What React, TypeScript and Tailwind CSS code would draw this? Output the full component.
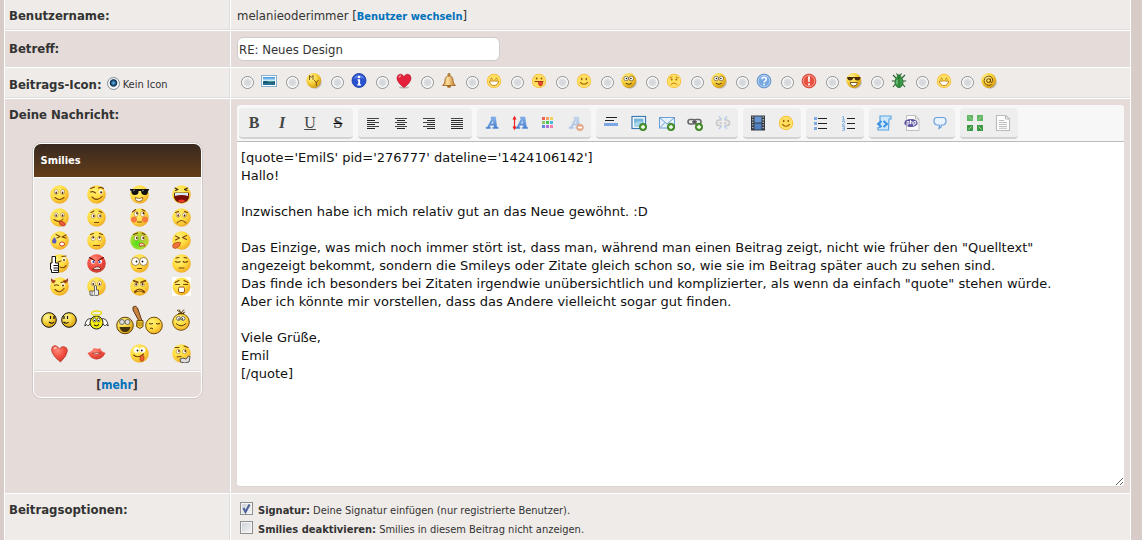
import type { ReactNode } from 'react';

/* ---------- shared drawing helpers ---------- */

function Defs() {
  return (
    <svg width="0" height="0" className="absolute" aria-hidden="true">
      <defs>
        <radialGradient id="yellow" cx="0.38" cy="0.32" r="0.78">
          <stop offset="0" stopColor="#fff27a" />
          <stop offset="0.5" stopColor="#ffdc40" />
          <stop offset="0.85" stopColor="#f2b22a" />
          <stop offset="1" stopColor="#d8951c" />
        </radialGradient>
        <radialGradient id="red" cx="0.38" cy="0.3" r="0.75">
          <stop offset="0" stopColor="#ff8a78" />
          <stop offset="0.6" stopColor="#ee4a3c" />
          <stop offset="1" stopColor="#c43a30" />
        </radialGradient>
        <radialGradient id="green" cx="0.35" cy="0.65" r="0.75">
          <stop offset="0" stopColor="#4fe01c" />
          <stop offset="0.5" stopColor="#a5dd30" />
          <stop offset="1" stopColor="#e0c03a" />
        </radialGradient>
        <radialGradient id="gold" cx="0.35" cy="0.3" r="0.8">
          <stop offset="0" stopColor="#fff6a0" />
          <stop offset="0.45" stopColor="#f8d440" />
          <stop offset="0.85" stopColor="#dba518" />
          <stop offset="1" stopColor="#a87608" />
        </radialGradient>
        <linearGradient id="blueA" x1="0" y1="0" x2="0" y2="1">
          <stop offset="0" stopColor="#8db8ee" />
          <stop offset="1" stopColor="#3f78cc" />
        </linearGradient>
        <linearGradient id="sky" x1="0" y1="0" x2="0" y2="1">
          <stop offset="0" stopColor="#3c8ed8" />
          <stop offset="0.45" stopColor="#c8ecff" />
          <stop offset="0.6" stopColor="#2f7a70" />
          <stop offset="1" stopColor="#1e6aa8" />
        </linearGradient>
        <linearGradient id="bell" x1="0" y1="0" x2="1" y2="0">
          <stop offset="0" stopColor="#c98a3a" />
          <stop offset="0.4" stopColor="#ffe0a0" />
          <stop offset="1" stopColor="#b8741f" />
        </linearGradient>
      </defs>
    </svg>
  );
}

function Svg({ w = 16, h = 16, children }: { w?: number; h?: number; children: ReactNode }) {
  return (
    <svg width={w} height={h} viewBox={`0 0 ${w} ${h}`} fill="none" className="block shrink-0" aria-hidden="true">
      {children}
    </svg>
  );
}

function Face({ fill = 'url(#yellow)', children }: { fill?: string; children: ReactNode }) {
  return (
    <Svg w={19} h={19}>
      <circle cx="9.5" cy="9.500" r="9.300" fill={fill} />
      {children}
    </Svg>
  );
}

const brown = '#7a4108';

function Eyes({ y = 7, dx = 0, dy = 0, r = 2.6 }: { y?: number; dx?: number; dy?: number; r?: number }) {
  return (
    <>
      <ellipse cx="6.2" cy={y} rx="2" ry={r} fill="#fff" stroke="#a0640f" strokeWidth="0.5" />
      <ellipse cx="12.6" cy={y} rx="2" ry={r} fill="#fff" stroke="#a0640f" strokeWidth="0.5" />
      <ellipse cx={6.2 + dx} cy={y + dy} rx="0.8" ry="1.3" fill="#5a2c05" />
      <ellipse cx={12.6 + dx} cy={y + dy} rx="0.8" ry="1.3" fill="#5a2c05" />
    </>
  );
}

function Line({ d, c = brown, w = 1.1 }: { d: string; c?: string; w?: number }) {
  return <path d={d} stroke={c} strokeWidth={w} strokeLinecap="round" strokeLinejoin="round" />;
}

/* ---------- smilies box ---------- */

const smilies: { name: string; art: ReactNode }[] = [
  { name: 'Lächeln', art: <Face><Eyes dy={0.8} /><Line d="M5 12.500q4.500 4 9 0" /></Face> },
  {
    name: 'Zwinkern',
    art: <Face><ellipse cx="14" cy="7" rx="1.900" ry="2.400" fill="#fff" /><circle cx="14.200" cy="7.400" r="1.100" fill="#5a2c05" /><Line d="M3.500 7q2.500-1 5 1M11.500 3q2.500-1.500 5 .500M3.500 3.500l4-1.500M5 12q5 5 10-.500" /></Face>,
  },
  {
    name: 'Cool',
    art: <Face><path d="M0 4h19v1.500h-1c0 3.500-1 4.500-3.300 4.500-2.700 0-3.400-1.600-3.700-4h-2.400c0 2.500-.900 4-3.600 4C2.500 10 1.500 9 1.300 5.500H0z" fill="#111" /><path d="M3 6l2-1M12 6l2-1" stroke="#8a8a8a" /><path d="M5 12.500q4 2 8 0 0 4-4 4t-4-4z" fill="#fff" stroke={brown} strokeWidth=".7" /></Face>,
  },
  {
    name: 'Lachen',
    art: <Face><Line d="M3 3l3 1.500-2.500 1M15.500 3l-3 1.500 2.500 1" c="#3c2410" /><path d="M2.500 8h14q1 5-2 8-5 3-10 0-3-3-2-8z" fill="#7c0e08" stroke="#4c1a08" strokeWidth=".8" /><path d="M3 8h13v3q-6.500-2-13 0z" fill="#d8ecff" /><path d="M5.500 16q4-3 8 0-4 2.400-8 0z" fill="#f23a2a" /></Face>,
  },
  {
    name: 'Zunge',
    art: <Face><Eyes dy={0.5} r={2.2} /><Line d="M4 11.500q5 4 9-.500" /><path d="M9 13.500q4-1.500 6.500 2.500 0 2.500-3 2-3.500-1-3.500-4.500z" fill="#ee5938" stroke="#a8321c" strokeWidth=".7" /></Face>,
  },
  { name: 'Verwundert', art: <Face><Eyes r={2.3} dx={0.5} y={8} /><Line d="M4 4.500l3-1.500M12 3l3 1.500M7.500 14.500h4" /></Face> },
  {
    name: 'Verlegen',
    art: <Face><circle cx="4" cy="11.500" r="3" fill="#f57b42" /><circle cx="15" cy="11.500" r="3" fill="#f57b42" /><Eyes y={6} dx={0.8} dy={-0.8} /><Line d="M2.500 4l3-2.500M12 1.500l3 1.500M7.500 14h4" /></Face>,
  },
  { name: 'Traurig', art: <Face><Eyes r={2.3} dy={0.5} /><Line d="M5 15q4.500-5 9 0M3.500 4.500l3-1M12.500 3.500l3 1" /></Face> },
  {
    name: 'Müde',
    art: <Face><Line d="M6 3.500l4 2-3 1.500M16 4l-4 2 4 1" /><path d="M4.500 6q3 4 1.500 6-2.500 1.500-4-1 0-2 2.500-5z" fill="#5a59c4" /><ellipse cx="12" cy="13" rx="2.500" ry="2" fill="#fff" stroke="#c4432b" /></Face>,
  },
  { name: 'Augenrollen', art: <Face><Eyes r={2.3} dy={-1} y={7.5} /><Line d="M3.500 3.500l3-1M12.500 2.500l3 1M6.500 14.500h6" /></Face> },
  {
    name: 'Krank',
    art: <Face fill="url(#green)"><Eyes y={7} dx={0.6} /><Line d="M3.500 3.500l4-1.500M12 2l3 1.500" /><path d="M9 13q3-2 5 0l1 2q-3-1-5 .500z" fill="#f8e0c8" stroke="#b5331c" strokeWidth=".8" /></Face>,
  },
  {
    name: 'Igitt',
    art: <Face><Line d="M3.500 5l4 2-4 2M14.500 4.500l-4 2 4 2" /><path d="M8.500 11.500q-6-1-8 3 .500 4 4 2.500 4-1.500 4-5.500z" fill="#f0703a" stroke="#a9451b" strokeWidth=".7" /></Face>,
  },
  {
    name: 'Daumen hoch',
    art: <Face><ellipse cx="14" cy="5.500" rx="1.800" ry="2.200" fill="#fff" /><circle cx="14" cy="6" r="1" fill="#5a2c05" /><Line d="M8 8l3-1M12 2.500l4-.500M10 13q4 2 6-1.500" /><path d="M2 2.500h3.500V9H8.500v9.500H1.500v-3H.5V9H2z" fill="#fff" stroke="#111" strokeWidth="1" /><path d="M3.500 11.500h5M3.500 14h5M3.500 16.300h5" stroke="#111" /></Face>,
  },
  {
    name: 'Wütend',
    art: <Face fill="url(#red)"><ellipse cx="6" cy="7.500" rx="2" ry="2.200" fill="#fff" /><ellipse cx="13" cy="7.500" rx="2" ry="2.200" fill="#fff" /><circle cx="6.500" cy="8" r="1.100" fill="#283bb0" /><circle cx="12.500" cy="8" r="1.100" fill="#283bb0" /><Line d="M2.500 3.500l5 3M16.500 3.500l-5 3" c="#5a0d08" /><path d="M5.500 15.500q3.500-4.500 8-1.500v1.500q-4-.500-8 0z" fill="#fff" stroke="#6a120a" strokeWidth=".8" /></Face>,
  },
  {
    name: 'Große Augen',
    art: <Face><circle cx="5.500" cy="7.500" r="4" fill="#fff" stroke="#8a6a3a" strokeWidth=".8" /><circle cx="13.500" cy="7.500" r="4" fill="#fff" stroke="#8a6a3a" strokeWidth=".8" /><circle cx="6.500" cy="7.500" r=".9" fill="#111" /><circle cx="12.500" cy="7.500" r=".9" fill="#111" /><Line d="M7.500 14.500h4" /></Face>,
  },
  { name: 'Schlafend', art: <Face><Line d="M3.500 7.500q2.500 1.500 4.500 0M11 7.500q2 1.500 4.500 0M7 14h5M4 4l3-.500M12 3.500l3 .500" /></Face> },
  {
    name: 'Teufel',
    art: <Face><path d="M1.500 1q-2 4 2.500 5.500L6 3.500Q2.500 3.500 1.500 1zM17.500 1q2 4-2.500 5.500l-2-3q3.500 0 4.500-2.500z" fill="#a84520" /><ellipse cx="13" cy="8" rx="1.800" ry="2" fill="#fff" /><circle cx="13" cy="8.400" r="1" fill="#5a2c05" /><Line d="M4.500 8.500q2-1.500 4 0M11 5.500l4-1M5 12.500q5 5 9-1" /></Face>,
  },
  {
    name: 'Psst',
    art: <Face><Eyes y={6.5} dy={0.6} /><path d="M7.500 9q1.500-1.500 2 0v4h2v5q-4 2-8.500 0v-4h4.500z" fill="#eee" stroke="#555" strokeWidth=".9" /><path d="M5 14v4M7.500 14v4" stroke="#777" strokeWidth=".8" /></Face>,
  },
  {
    name: 'Sauer',
    art: <Face><Eyes r={1.8} y={7.5} dy={-0.2} /><path d="M3 3.500l5.500 2M16 3.500l-5.500 2" stroke={brown} strokeWidth="1.500" /><Line d="M4.500 15q5-6 10 0M5 15.500q4.500-3 9 0" w={1.2} /></Face>,
  },
  {
    name: 'Gähnen',
    art: <Svg w={19} h={19}><rect width="19" height="19" fill="#fff" /><circle cx="9.500" cy="9.500" r="9" fill="url(#yellow)" /><Line d="M3 5.500l4-2M16 5.500l-4-2M3.500 7.500h4M11.500 7.500h4" /><rect x="6.500" y="10" width="6" height="5.500" rx="1.500" fill="#fff" stroke="#a05b10" /></Svg>,
  },
  {
    name: 'Unterhaltung',
    art: (
      <Svg w={36} h={18}>
        <circle cx="8" cy="9" r="7.300" fill="url(#gold)" stroke="#111" />
        <circle cx="28" cy="9" r="7.300" fill="url(#gold)" stroke="#111" />
        <path d="M9.500 5v3M13 5v3M23 5v3M26.500 5v3M8 11q3 2.500 5 0M22.500 11q3 2.500 5 0" stroke="#111" strokeWidth="1.200" />
      </Svg>
    ),
  },
  {
    name: 'Engel',
    art: (
      <Svg w={25} h={20}>
        <path d="M8 9Q2 7 .8 16l2-1.500 1.500 1.500 1.500-2 2.500 1zM17 9q6-2 7.200 7l-2-1.500-1.500 1.500-1.500-2-2.500 1z" fill="#fff" stroke="#111" strokeWidth=".8" />
        <circle cx="12.500" cy="12.500" r="6.500" fill="#f2ec10" stroke="#222" />
        <ellipse cx="12.500" cy="3" rx="5" ry="2" stroke="#e8de10" strokeWidth="1.400" />
        <ellipse cx="10.500" cy="10" rx="1.500" ry="2" fill="#fff" stroke="#111" strokeWidth=".6" />
        <ellipse cx="14.500" cy="10" rx="1.500" ry="2" fill="#fff" stroke="#111" strokeWidth=".6" />
        <path d="M10.500 11v-1M14.500 11v-1M10 15q3 2 5-.500" stroke="#111" />
      </Svg>
    ),
  },
  {
    name: 'Schläger',
    art: (
      <Svg w={47} h={30}>
        <circle cx="9" cy="20.500" r="8.300" fill="url(#gold)" stroke="#5d4208" />
        <circle cx="6" cy="17" r="2.500" fill="#ddd" stroke="#555" strokeWidth=".8" />
        <circle cx="11.500" cy="17" r="2.500" fill="#ddd" stroke="#555" strokeWidth=".8" />
        <path d="M3.500 22h11q-1 5-5.500 5t-5.500-5z" fill="#44320c" />
        <circle cx="38" cy="20.500" r="8.300" fill="url(#yellow)" stroke="#6d4c08" />
        <path d="M33 18.500q2 1 4 0M40 18.500q2 1 4 0M34 23.500q1.500-1 3 .500" stroke="#4c3004" />
        <path d="M17 2q3-2 4.500 1l4.500 13-2.500 1L17 5z" fill="#c98443" stroke="#5c3512" />
        <path d="M21 15.500h6v6l-3 2-3.500-2z" fill="#f0c52c" stroke="#6d4c08" />
        <path d="M21 18h5M21 20h5" stroke="#8a6508" strokeWidth=".7" />
      </Svg>
    ),
  },
  {
    name: 'Igel',
    art: (
      <Svg w={18} h={22}>
        <circle cx="9" cy="13" r="8.300" fill="url(#yellow)" stroke="#7c5405" />
        <path d="M9 4L5 1M9 4l3-3.500M9 4l-2-3.500M6 4.500h6M9 5l4-2" stroke="#5d3d06" />
        <circle cx="6.500" cy="9.500" r="2" fill="#fff" stroke="#555" strokeWidth=".8" />
        <circle cx="11" cy="9.500" r="2" fill="#fff" stroke="#555" strokeWidth=".8" />
        <circle cx="7" cy="10" r=".8" fill="#111" />
        <circle cx="10.500" cy="10" r=".8" fill="#111" />
        <path d="M4 14.500q5 4.500 10 0" stroke="#5d3d06" />
      </Svg>
    ),
  },
  {
    name: 'Herz',
    art: (
      <Svg w={19} h={19}>
        <path d="M10.500 18Q17 12 17.500 6.500 17 3 13.500 2.500q-3 0-4 2.500Q8 2 5 1.500 1.500 2 1.500 6q1 6 9 12z" fill="url(#red)" stroke="#b73a2c" strokeWidth=".7" />
        <path d="M4 5q1-1.500 2.500-1" stroke="#ffc4ba" strokeWidth="1.500" />
      </Svg>
    ),
  },
  {
    name: 'Kuss',
    art: (
      <Svg w={19} h={19}>
        <path d="M.5 9q4-1 6.500-5 2 1 3 .500 1.500 1 3-.500 1 3.500 5.500 5-3 6-9 6.500Q4 15 .5 9z" fill="url(#red)" />
        <path d="M5 9.500q4-1.500 9-.500-4 2.500-9 .500z" fill="#fff" stroke="#a82f26" strokeWidth=".8" />
      </Svg>
    ),
  },
  {
    name: 'Lecker',
    art: <Face><circle cx="6.500" cy="6" r="2.800" fill="#fff" /><circle cx="12.500" cy="6" r="2.800" fill="#fff" /><circle cx="7.500" cy="6.500" r=".9" fill="#111" /><circle cx="11.800" cy="6.500" r=".9" fill="#111" /><Line d="M3.500 11q5 4 10-1" /><path d="M10.500 12q3-2 3.500 1 .500 4-2.500 4.500-2.500-1-1-5.500z" fill="#f0642f" stroke="#a8321c" strokeWidth=".7" /></Face>,
  },
  {
    name: 'Grübeln',
    art: <Face><Eyes y={7.5} r={2.3} dx={0.7} dy={-0.5} /><Line d="M3 3.500l4 0M12 2l4 1.500M5 13l4-.500" /><path d="M8 15q3-2 6 0l2.500-3 1.500.500-1 5.500q-4 2-8.500 0z" fill="#ddd" stroke="#444" strokeWidth=".9" /></Face>,
  },
];

/* ---------- 16px post icons ---------- */

function Coin({ children }: { children: ReactNode }) {
  return (
    <Svg>
      <ellipse cx="9" cy="9" rx="6.800" ry="6.800" fill="#8d8577" opacity=".45" />
      <circle cx="7.700" cy="7.500" r="7.400" fill="url(#gold)" />
      {children}
    </Svg>
  );
}

function FlatFace({ children }: { children: ReactNode }) {
  return (
    <Svg>
      <circle cx="8" cy="8" r="7.200" fill="#f9b91f" />
      <circle cx="8" cy="8" r="6" fill="#ffdf5c" stroke="#ffe98f" strokeWidth=".8" />
      {children}
    </Svg>
  );
}

const flatSmile = (
  <FlatFace>
    <ellipse cx="5.700" cy="6" rx=".8" ry="1.200" fill="#9a5b0c" />
    <ellipse cx="10.300" cy="6" rx=".8" ry="1.200" fill="#9a5b0c" />
    <Line d="M4.500 9.500q3.500 3.500 7 0" c="#a8640c" />
  </FlatFace>
);

const flatGrin = (
  <FlatFace>
    <Line d="M4.500 6q1-1.500 2 0M9.500 6q1-1.500 2 0" c="#a8640c" w={1} />
    <path d="M3.500 8h9q-.500 4.500-4.500 4.500T3.500 8z" fill="#fff" stroke="#c07a10" strokeWidth=".9" />
  </FlatFace>
);

const goldEyes = (
  <Coin>
    <circle cx="5.200" cy="5.500" r="2.300" fill="#fff" stroke="#5a3a05" strokeWidth=".6" />
    <circle cx="10.200" cy="5.500" r="2.300" fill="#fff" stroke="#5a3a05" strokeWidth=".6" />
    <circle cx="5.500" cy="5.500" r=".8" fill="#111" />
    <circle cx="9.900" cy="5.500" r=".8" fill="#111" />
    <Line d="M5 10.500q3 2 5.500 0" c="#5a3a05" w={1} />
  </Coin>
);

const postIcons: { name: string; art: ReactNode }[] = [
  {
    name: 'Bild',
    art: <Svg><rect x=".5" y="2.500" width="15" height="11" fill="#fff" stroke="#8cb0cf" /><rect x="2" y="4" width="12" height="8" fill="url(#sky)" /><path d="M2 9q3-2 5 0 3 1.500 7-.500v1.500H2z" fill="#174f6b" /></Svg>,
  },
  { name: 'MyBB', art: <Coin><Line d="M3.500 6.500V2.500l1.700 2L7 2.500v4M8.500 7.500l1.800 2 1.700-2M10.300 9.500v3" c="#6b4304" w={0.9} /></Coin> },
  {
    name: 'Info',
    art: <Svg><circle cx="8" cy="7.500" r="7" fill="#2a52d0" stroke="#173a9e" strokeWidth=".8" /><path d="M2.500 6Q4 2 8 2t5.500 4q-5-2-11 0z" fill="#88a6f4" opacity=".5" /><circle cx="8" cy="4" r="1.300" fill="#fff" /><path d="M6.500 6.300h2.600v4.900h1v1.200H6.200v-1.200h1V7.500h-.7z" fill="#fff" /></Svg>,
  },
  {
    name: 'Herz',
    art: <Svg><ellipse cx="8" cy="14.500" rx="5" ry="1" fill="#bcb6b2" /><path d="M8 14.500Q1 9.500 1 5q.300-3.500 3.500-3.800Q7 1.200 8 4q1-2.800 3.500-2.800Q14.700 1.500 15 5q0 4.500-7 9.500z" fill="#e5203a" stroke="#b8152c" strokeWidth=".7" /><path d="M3 4.500Q3.500 2.800 5 3" stroke="#ff9aa6" strokeWidth="1.300" /></Svg>,
  },
  {
    name: 'Glocke',
    art: <Svg><circle cx="8" cy="1.700" r="1.300" fill="#c99040" stroke="#95611a" strokeWidth=".6" /><path d="M1.500 12.500q2.500-2 2.500-5Q4 3 8 3t4 4.500q0 3 2.500 5z" fill="url(#bell)" stroke="#9a6420" strokeWidth=".8" /><ellipse cx="8" cy="13.500" rx="2" ry="1.300" fill="#a3651a" /></Svg>,
  },
  { name: 'Grinsen', art: flatGrin },
  {
    name: 'Zunge',
    art: <FlatFace><circle cx="5.700" cy="5.500" r="1" fill="#9a5b0c" /><circle cx="10.500" cy="5.500" r="1" fill="#9a5b0c" /><Line d="M4 8.500h8" c="#9a3a0c" /><path d="M7.500 8.500h4v2.500q-.500 2-2 2t-2-2z" fill="#e6452e" stroke="#b02c18" strokeWidth=".6" /></FlatFace>,
  },
  { name: 'Lächeln', art: flatSmile },
  { name: 'Staunen', art: goldEyes },
  {
    name: 'Traurig',
    art: <FlatFace><circle cx="5.700" cy="6.500" r=".9" fill="#a8640c" /><circle cx="10.300" cy="6.500" r=".9" fill="#a8640c" /><Line d="M5 11.500q3-3 6 0M4 5l2-1M12 5l-2-1" c="#b8700c" w={0.9} /></FlatFace>,
  },
  { name: 'Augenrollen', art: goldEyes },
  {
    name: 'Frage',
    art: <Svg><circle cx="8" cy="8" r="6.900" fill="#76a7de" stroke="#5386c4" strokeWidth=".8" /><circle cx="8" cy="8" r="5.700" stroke="#c5dcf5" strokeWidth=".8" /><path d="M5.800 6.300q.200-2 2.300-2 2.200.1 2.200 2 0 1.200-1.300 1.800-.900.500-.900 1.300" stroke="#fff" strokeWidth="1.500" /><rect x="7.300" y="10.600" width="1.600" height="1.600" fill="#fff" /></Svg>,
  },
  {
    name: 'Ausrufezeichen',
    art: <Svg><circle cx="8" cy="8" r="6.900" fill="#e8513f" stroke="#d23a2a" strokeWidth=".8" /><circle cx="8" cy="8" r="5.700" stroke="#f9b0a6" strokeWidth=".8" /><path d="M7 3.500h2l-.300 5.500H7.300zM7 10.500h2v1.800H7z" fill="#fff" /></Svg>,
  },
  {
    name: 'Cool',
    art: <Coin><path d="M1 4h13.500q-.300 3.500-3 3.500T8.300 5H7.200q-.500 2.500-3 2.500T1 4z" fill="#4a2c04" /><path d="M4 9.500h7.500q-.500 3.500-3.700 3.500T4 9.500z" fill="#fff" stroke="#5a3a05" strokeWidth=".8" /></Coin>,
  },
  {
    name: 'Käfer',
    art: <Svg><path d="M5 5L2 2M11 5l3-3M4 8H.8M12 8h3.200M4.500 11L2 14M11.500 11l2.500 3M6.500 2L5.500.5M9.500 2l1-1.500" stroke="#245e2a" strokeWidth="1.100" /><ellipse cx="8" cy="9" rx="4" ry="5.500" fill="#3c9a48" stroke="#1f6b2c" strokeWidth=".9" /><circle cx="8" cy="3.500" r="2.200" fill="#2f8039" /><path d="M8 5v9" stroke="#1f6b2c" strokeWidth=".8" /><path d="M6 7v4" stroke="#8ad492" /></Svg>,
  },
  { name: 'Lachen', art: flatGrin },
  { name: 'At', art: <Coin><circle cx="7.500" cy="7.600" r="1.900" stroke="#6b3a04" strokeWidth="1" /><path d="M9.500 5.500v3.300q.400 1.200 1.500.500 1.200-1.500.500-3.600Q10.600 3 7.500 3 3.300 3.500 3 7.600q.400 4.400 4.600 4.700 1.500 0 2.900-.700" stroke="#6b3a04" strokeWidth=".9" /></Coin> },
];

/* ---------- toolbar icons ---------- */

function Plus({ x = 11.5, y = 12 }: { x?: number; y?: number }) {
  return (
    <>
      <circle cx={x} cy={y} r="3.700" fill="#4e9a2e" stroke="#2f701a" strokeWidth=".7" />
      <path d={`M${x - 2} ${y}h4M${x} ${y - 2}v4`} stroke="#fff" strokeWidth="1.400" />
    </>
  );
}

function Bars({ lines }: { lines: [number, number][] }) {
  return (
    <Svg>
      {lines.map(([x, w], i) => (
        <rect key={i} x={x} y={3 + i * 2} width={w} height="1" fill={i % 2 ? '#222' : '#444'} />
      ))}
    </Svg>
  );
}

const glyph = 'block w-4 text-center font-["Liberation_Serif",serif] text-base leading-4 text-[#444]';
const letterA = <path d="M1 13.500h4.500v-1.300H4.300l.9-1.900h3.700l.3 1.900H7.800v1.300h5.400v-1.300h-1.300L10.400 2H6v1.300h1L2.500 12.200H1zM6 8.800l2.200-4 .5 4z" fill="url(#blueA)" stroke="#5d92dc" strokeWidth=".5" />;

const groups: { name: string; art: ReactNode }[][] = [
  [
    { name: 'Fett', art: <span className={`${glyph} font-bold`}>B</span> },
    { name: 'Kursiv', art: <span className={`${glyph} font-bold italic`}>I</span> },
    { name: 'Unterstrichen', art: <span className={`${glyph} underline`}>U</span> },
    { name: 'Durchgestrichen', art: <span className={`${glyph} font-bold line-through decoration-black`}>S</span> },
  ],
  [
    { name: 'Linksbündig', art: <Bars lines={[[2, 12], [2, 8], [2, 12], [2, 8], [2, 12], [2, 8]]} /> },
    { name: 'Zentriert', art: <Bars lines={[[2, 12], [4, 8], [2, 12], [4, 8], [2, 12], [4, 8]]} /> },
    { name: 'Rechtsbündig', art: <Bars lines={[[2, 12], [6, 8], [2, 12], [6, 8], [2, 12], [6, 8]]} /> },
    { name: 'Blocksatz', art: <Bars lines={[[2, 12], [2, 12], [2, 12], [2, 12], [2, 12], [2, 12]]} /> },
  ],
  [
    { name: 'Schriftart', art: <Svg><g transform="translate(1 0)">{letterA}</g></Svg> },
    { name: 'Schriftgröße', art: <Svg><g transform="translate(2.500 0)">{letterA}</g><path d="M2.500 3v10M1 4.500L2.500 2 4 4.500M1 11.500L2.500 14 4 11.500" stroke="#e22" strokeWidth="1.200" /></Svg> },
    {
      name: 'Schriftfarbe',
      art: (
        <Svg>
          {['#f0605c', '#f2a268', '#f2cf5e', '#8ac86a', '#48c05c', '#48b8e0', '#6884d8', '#b070d8', '#f080a8'].map((c, i) => (
            <rect key={c} x={2 + (i % 3) * 4} y={2 + Math.floor(i / 3) * 4} width="3" height="3" fill={c} />
          ))}
        </Svg>
      ),
    },
    { name: 'Formatierung entfernen', art: <Svg><g opacity=".4">{letterA}</g><circle cx="12" cy="12.500" r="3.300" fill="#eeb090" stroke="#dd9a78" strokeWidth=".7" /><path d="M10 12.500h4" stroke="#fff" strokeWidth="1.300" /></Svg> },
  ],
  [
    { name: 'Horizontale Linie', art: <Svg><path d="M3 2.500h11M2 5.500h9" stroke="#222" /><rect x="1" y="8" width="14" height="3" fill="#7da7e4" /></Svg> },
    { name: 'Bild einfügen', art: <Svg><rect x="1" y="1.500" width="13.500" height="12" fill="#fff" stroke="#3c78b4" strokeWidth="1.200" /><rect x="3" y="3.500" width="9.500" height="8" fill="#76b4dc" /><path d="M3 8q5-3 9.500-1v4.500H3z" fill="#a5d4ea" /><Plus x={12} /></Svg> },
    { name: 'E-Mail einfügen', art: <Svg><rect x=".5" y="2.500" width="15" height="10.500" fill="#e6f1fc" stroke="#6c9fd4" /><path d="M1 3l7 6 7-6M1 12.500l5-5M15 12.500l-5-5" stroke="#6c9fd4" /><Plus x={12} /></Svg> },
    { name: 'Link einfügen', art: <Svg><rect x="1" y="4.500" width="7" height="4.500" rx="2.200" stroke="#666" strokeWidth="1.600" /><rect x="7" y="4.500" width="7" height="4.500" rx="2.200" stroke="#666" strokeWidth="1.600" /><path d="M5 6.800h5" stroke="#444" strokeWidth="1.200" /><Plus x={12} /></Svg> },
    { name: 'Link entfernen', art: <Svg><path d="M6.500 5H4Q1.500 5.500 1.500 8T4 10.500h2.500M9.500 5H12q2.500.500 2.500 3T12 10.500H9.500M4.500 8H7M9 8h2.500" stroke="#c8c8c8" strokeWidth="1.700" /><path d="M4 1.500l2.500 3M12 1.500l-2.500 3M4 14l2.500-3M12 14l-2.500-3" stroke="#b5cdeb" strokeWidth="1.300" /></Svg> },
  ],
  [
    { name: 'Video einfügen', art: <Svg><rect x="1" y=".5" width="14" height="15" fill="#333a42" /><path d="M2.800 1.500v13M13.200 1.500v13" stroke="#d0d4d8" strokeWidth="1.200" strokeDasharray="1.300 1.300" /><rect x="4.500" y="1.500" width="7" height="6" fill="#6795d2" /><rect x="4.500" y="8.500" width="7" height="6" fill="#5080c4" /></Svg> },
    { name: 'Smiley einfügen', art: flatSmile },
  ],
  [
    { name: 'Liste', art: <Svg><path d="M5 3.500h9M5 8.500h9M5 13.500h9" stroke="#222" /><path d="M1 2h3v3H1zM1 7h3v3H1zM1 12h3v3H1z" fill="#7ea9e4" /></Svg> },
    { name: 'Nummerierte Liste', art: <Svg><path d="M6 3.500h8M6 8.500h8M6 13.500h8" stroke="#222" /><path d="M1 2l1.500-.500V5M1 5h3M1 6.500h2.500v1.500L1 10h3M1 11.500h2.500v3.800H1M1.500 13.400h2" stroke="#7cabe4" strokeWidth=".9" /></Svg> },
  ],
  [
    { name: 'Code', art: <Svg><path d="M4 1h11v3h-2l-.500 11H2v-2.500h2z" fill="#cfe7fb" stroke="#5ba4e2" strokeWidth="1.200" /><path d="M5.500 6L2 9l3.500 3M7.500 6L11 9l-3.500 3" stroke="#368fe0" strokeWidth="1.900" /></Svg> },
    {
      name: 'PHP-Code',
      art: <Svg><path d="M2.500.5h9l3.500 3.500v11.500H2.500z" fill="#fafafa" stroke="#c0c0c0" /><path d="M11.500.5V4H15" stroke="#bbb" /><ellipse cx="7" cy="8" rx="6.700" ry="4" fill="#554f9c" /><path d="M3 11V6.500h2V9H3M6.500 4.800V9.300M6.500 6.700h1.700v2.600M9.800 11V6.500h2V9h-2" stroke="#fff" strokeWidth=".9" /></Svg>,
    },
    { name: 'Zitat', art: <Svg><path d="M5 2.500h6q3 0 3 3.500t-3 4H9.500q0 2.500-2.500 3.500.700-2 .300-3.500H5q-3-.500-3-4t3-3.500z" fill="#e8f3fd" stroke="#6a9fdc" strokeWidth="1.200" /></Svg> },
  ],
  [
    {
      name: 'Vollbild',
      art: <Svg>{[[0, 0], [10, 0], [0, 10], [10, 10]].map(([x, y]) => <g key={`${x}-${y}`}><rect x={x} y={y} width="6" height="6" fill={y ? '#3f9a45' : '#62b862'} /><path d={x === y ? `M${x + 1.5} ${y + 1.5}l3 3` : `M${x + 1.5} ${y + 4.5}l3-3`} stroke="#a4d8a0" /></g>)}</Svg>,
    },
    { name: 'Quelltext', art: <Svg><path d="M1.500.5h9L14.500 4v11.500h-13z" fill="#fdfdfd" stroke="#bbb" strokeWidth="1.100" /><path d="M10.500.5V4h4" stroke="#bbb" /><path d="M4 5.500h5M4 7.500h8M4 9.500h8M4 11.500h8M4 13.300h8" stroke="#bdbdbd" /></Svg> },
  ],
];

/* ---------- form controls ---------- */

const radioClass =
  'block size-[13px] shrink-0 appearance-none rounded-full border border-[#8e8f8f] bg-[radial-gradient(circle,#d0d4d8_0,#dcdfe2_45%,#fff_62%)] checked:border-[#7d8c96] checked:bg-[radial-gradient(circle_at_50%_45%,#5cc4ec_0,#1b4a78_30%,#14304e_40%,#f4f8fa_52%)]';

function Tick({ id, bold, text, checked }: { id: string; bold: string; text: string; checked?: boolean }) {
  return (
    <div className="flex h-[19px] items-center">
      <span className="relative mr-[5px] block size-[13px] shrink-0">
        <input
          id={id}
          type="checkbox"
          defaultChecked={checked}
          className="peer block size-[13px] appearance-none border border-[#8e8f8f] bg-gradient-to-br from-[#cbcfd5] to-[#f6f6f6] shadow-[inset_0_0_0_1px_#f4f4f4]"
        />
        <svg viewBox="0 0 13 13" fill="none" className="pointer-events-none absolute inset-0 hidden peer-checked:block" aria-hidden="true">
          <path d="M3.500 6l2 4L9.500 2.500" stroke="#4a5f97" strokeWidth="2" />
        </svg>
      </span>
      <label htmlFor={id} className="pt-1 text-[11px] leading-4">
        <strong>{bold}</strong> {text}
      </label>
    </div>
  );
}

function Row({ shade, label, children }: { shade: 'light' | 'dark'; label: ReactNode; children: ReactNode }) {
  const bg = shade === 'light' ? 'bg-[#efebe8]' : 'bg-[#e5dbd8]';
  return (
    <div className={`grid grid-cols-[225px_minmax(0,1fr)] border-b border-white ${bg}`}>
      <div className="border-r border-b border-[#ddd] px-1 font-bold">{label}</div>
      <div className="border-b border-l border-b-[#ddd] border-l-white pr-[6px] pl-[6px]">{children}</div>
    </div>
  );
}

const message = `[quote='EmilS' pid='276777' dateline='1424106142']
Hallo!

Inzwischen habe ich mich relativ gut an das Neue gewöhnt. :D

Das Einzige, was mich noch immer stört ist, dass man, während man einen Beitrag zeigt, nicht wie früher den "Quelltext"
angezeigt bekommt, sondern die Smileys oder Zitate gleich schon so, wie sie im Beitrag später auch zu sehen sind.
Das finde ich besonders bei Zitaten irgendwie unübersichtlich und komplizierter, als wenn da einfach "quote" stehen würde.
Aber ich könnte mir vorstellen, dass das Andere vielleicht sogar gut finden.

Viele Grüße,
Emil
[/quote]`;

export default function App() {
  return (
    <div className="min-h-screen bg-[#d8ccc8] pr-[11px] pl-1 font-['DejaVu_Sans_Condensed','DejaVu_Sans',sans-serif] text-[13px] leading-5 text-[#333]">
      <Defs />
      <form className="border-x border-white">
        <Row shade="light" label={<div className="pt-[6px] pb-[3px]">Benutzername:</div>}>
          <div className="pt-[6px] pb-[2px]">
            melanieoderimmer [
            <a href="#wechseln" className="text-[11px] font-bold text-[#0072bc]">Benutzer wechseln</a>]
          </div>
        </Row>

        <Row shade="dark" label={<label htmlFor="betreff" className="block pt-2">Betreff:</label>}>
          <div className="pt-[6px] pb-[5px]">
            <input
              id="betreff"
              type="text"
              defaultValue="RE: Neues Design"
              className="block h-6 w-[263px] rounded-md border border-[#ccc] bg-white px-px text-[13px] text-[#333]"
            />
          </div>
        </Row>

        <Row
          shade="light"
          label={
            <div className="flex items-center pt-[7px]">
              <span>Beitrags-Icon:</span>
              <input id="icon-none" type="radio" name="icon" defaultChecked className={`${radioClass} mr-[3px] mb-[3px] ml-[5px]`} />
              <label htmlFor="icon-none" className="text-[11px] font-normal">Kein Icon</label>
            </div>
          }
        >
          <div className="flex flex-wrap gap-x-[9px] pt-[5px] pb-2 pl-1">
            {postIcons.map((icon, i) => (
              <label key={i} className="flex items-end gap-[7px]">
                <input type="radio" name="icon" aria-label={icon.name} className={radioClass} />
                {icon.art}
              </label>
            ))}
          </div>
        </Row>

        <Row
          shade="dark"
          label={
            <>
              <label htmlFor="nachricht" className="block pt-[6px]">Deine Nachricht:</label>
              <div className="mx-auto mt-[18px] w-[169px] overflow-hidden rounded-lg border border-white shadow-[0_0_0_1px_#cfcac8]">
                <div className="border-b border-white bg-gradient-to-b from-[#38291f] to-[#633d17] px-[7px] pt-[7px] pb-[6px] text-[11px] text-white">
                  Smilies
                </div>
                <div className="bg-[#efebe8] px-1 pt-[5px] pb-[5px]">
                  <div className="grid grid-cols-[43px_31px_55px_29px] grid-rows-[23px_23px_23px_23px_23px_44px_23px]">
                    {smilies.map((s) => (
                      <button key={s.name} type="button" aria-label={s.name} className="flex items-center justify-center">
                        {s.art}
                      </button>
                    ))}
                  </div>
                </div>
                <div className="border-t border-[#ddd]">
                  <div className="border-t border-white pt-[3px] pb-[2px] text-center text-[12px]">
                    [<a href="#mehr" className="text-[#0072bc]">mehr</a>]
                  </div>
                </div>
              </div>
            </>
          }
        >
          <div className="mt-[6px] mb-[5px] overflow-hidden rounded border-b border-[#d8d4d2] bg-white">
            <div className="flex flex-wrap gap-[5px] border-b border-[#bbb] bg-[#f7f7f7] px-[2px] pt-[3px] pb-[2px]">
              {groups.map((g, i) => (
                <div key={i} className="flex rounded border-b-2 border-[#d2d2d2] bg-[#eee] px-px">
                  {g.map((b) => (
                    <button key={b.name} type="button" aria-label={b.name} className="flex h-[29px] w-7 items-center justify-center">
                      {b.art}
                    </button>
                  ))}
                </div>
              ))}
            </div>
            <textarea
              id="nachricht"
              defaultValue={message}
              className="block h-[344px] w-full resize bg-white px-1 pt-[7px] font-['DejaVu_Sans',sans-serif] text-[13px] leading-[18px] text-[#111] outline-none"
            />
          </div>
        </Row>

        <Row shade="light" label={<div className="pt-[6px]">Beitragsoptionen:</div>}>
          <div className="pt-[5px] pb-2 pl-[3px]">
            <Tick id="signatur" bold="Signatur:" text="Deine Signatur einfügen (nur registrierte Benutzer)." checked />
            <Tick id="smilies-aus" bold="Smilies deaktivieren:" text="Smilies in diesem Beitrag nicht anzeigen." />
          </div>
        </Row>
      </form>
    </div>
  );
}
